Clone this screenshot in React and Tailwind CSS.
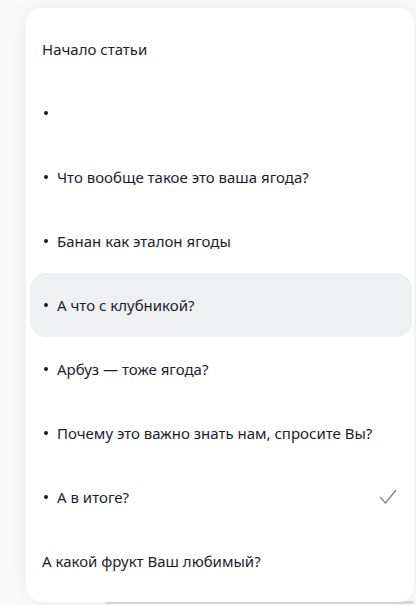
const items = [
  { text: 'Начало статьи', bullet: false },
  { text: '', bullet: true },
  { text: 'Что вообще такое это ваша ягода?', bullet: true },
  { text: 'Банан как эталон ягоды', bullet: true },
  { text: 'А что с клубникой?', bullet: true, active: true },
  { text: 'Арбуз — тоже ягода?', bullet: true },
  { text: 'Почему это важно знать нам, спросите Вы?', bullet: true },
  { text: 'А в итоге?', bullet: true, done: true },
  { text: 'А какой фрукт Ваш любимый?', bullet: false },
];

function Check() {
  return (
    <svg width="18" height="16" viewBox="0 0 18 16" fill="none">
      <path d="M1.5 8.5 L6.5 14 L16.5 1.5" stroke="#8c8c8c" strokeWidth="1.5" strokeLinecap="round" strokeLinejoin="round" />
    </svg>
  );
}

export default function App() {
  return (
    <div className="min-h-[605px] w-[416px] bg-[#fafafa] pt-2 pl-[26px] overflow-hidden" style={{ fontFamily: '"Noto Sans", "Open Sans", sans-serif' }}>
      <div className="w-[388px] rounded-2xl bg-white py-[9px] pl-1 pr-[2px] shadow-[0_0_22px_rgba(0,0,0,0.07)] relative z-10">
        {items.map((item, i) => (
          <div
            key={i}
            className={`flex h-16 items-center rounded-2xl pl-3 pr-[15px] text-[15px] text-[#1d1d2b] ${item.active ? 'bg-[#eff0f2]' : ''}`}
          >
            {item.bullet && (
              <span className="flex w-[15px] shrink-0 items-center pl-[2px]">
                <span className="h-1 w-1 rounded-full bg-[#1d1d2b]" />
              </span>
            )}
            <span className="flex-1">{item.text}</span>
            {item.done && <Check />}
          </div>
        ))}
      </div>
      <div className="ml-[79px] h-[3px] w-[309px] -mt-[1px] rounded-b bg-[#dcdce6]" />
    </div>
  );
}
